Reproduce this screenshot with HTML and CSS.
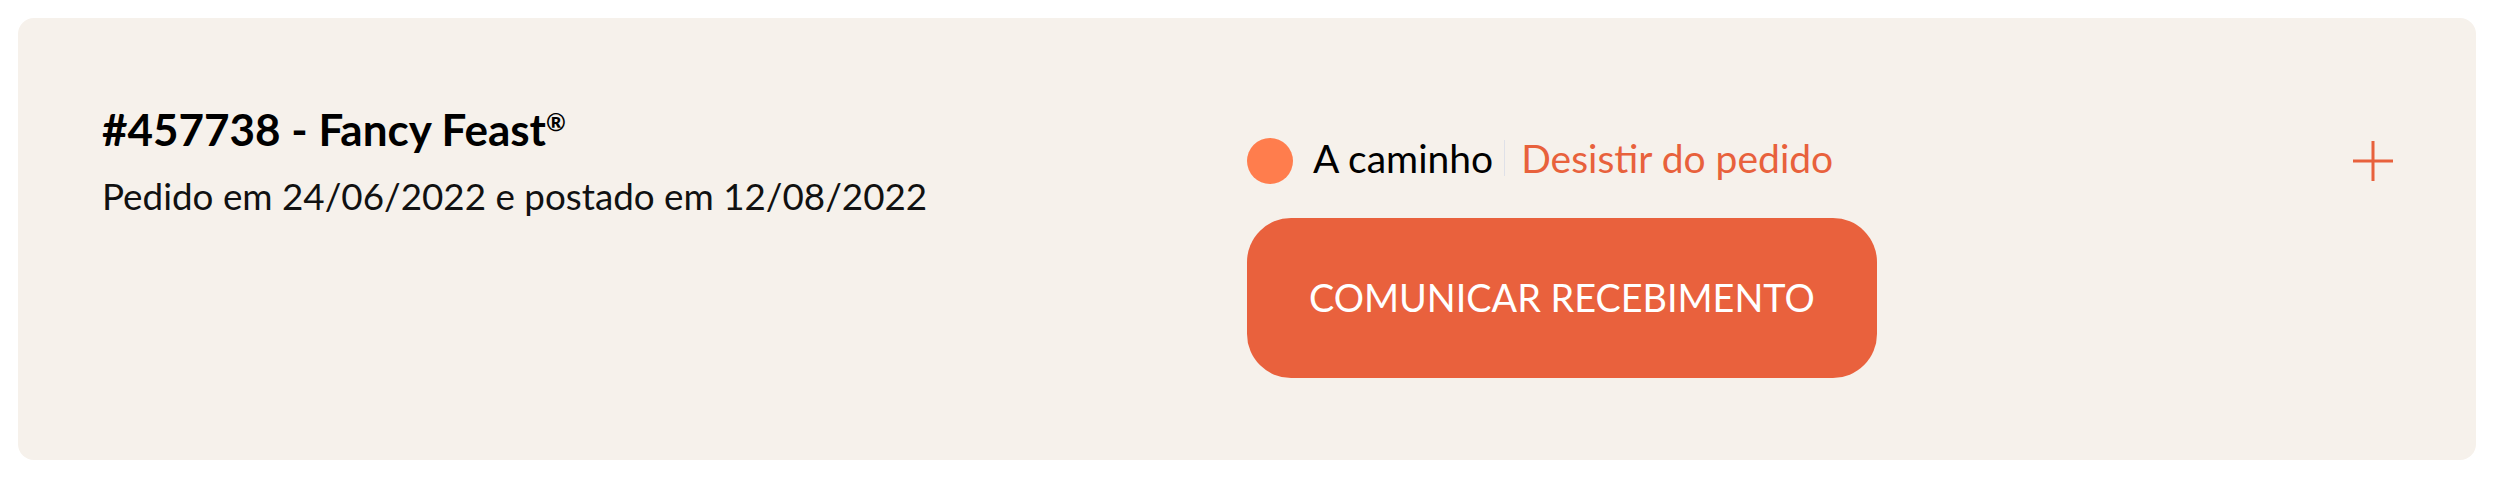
FILE: index.html
```html
<!DOCTYPE html>
<html lang="pt-BR">
<head>
<meta charset="utf-8">
<title>Pedido #457738</title>
<link rel="stylesheet" href="styles.css">
</head>
<body>
  <main class="page">
    <article class="order-card">
      <div class="order-info">
        <h2 class="order-title">#457738 - Fancy Feast<sup class="reg">®</sup></h2>
        <p class="order-dates">Pedido em 24/06/2022 e postado em 12/08/2022</p>
      </div>
      <div class="order-actions">
        <div class="status-row">
          <span class="status-dot"></span>
          <span class="status-label">A caminho</span>
          <a class="cancel-link" href="#">Desistir do pedido</a>
          <button class="expand-btn" type="button" aria-label="Expandir">
            <svg viewBox="0 0 40 40" width="40" height="40" aria-hidden="true">
              <path d="M20 0V40M0 20H40" stroke="currentColor" stroke-width="3" fill="none"/>
            </svg>
          </button>
        </div>
        <button class="confirm-btn" type="button">COMUNICAR RECEBIMENTO</button>
      </div>
    </article>
  </main>
</body>
</html>
```

FILE: styles.css
```css
* { box-sizing: border-box; }

html, body {
  margin: 0;
  padding: 0;
  background: #ffffff;
}

body {
  font-family: Lato, "Noto Sans", "Liberation Sans", sans-serif;
  color: #000;
}

.page {
  padding: 18px 32px 0 18px;
}

.order-card {
  display: flex;
  align-items: flex-start;
  background: #f6f1eb;
  border-radius: 16px;
  padding: 86px 83px 82px 84px;
}

.order-info {
  flex: 0 0 1145px;
}

.order-title {
  margin: 0;
  font-size: 44px;
  line-height: 50px;
  font-weight: 700;
  color: #000;
}

.reg {
  font-size: 24px;
  font-weight: 700;
  vertical-align: top;
  line-height: 1;
  position: relative;
  top: 6px;
}

.order-dates {
  margin: 20px 0 0;
  font-size: 36.8px;
  line-height: 44px;
  font-weight: 400;
  color: #111;
}

.order-actions {
  flex: 1;
  display: flex;
  flex-direction: column;
  align-items: flex-start;
  margin-top: 34px;
  gap: 34px;
}

.status-row {
  display: flex;
  align-items: center;
  width: 100%;
  height: 46px;
}

.status-dot {
  flex: 0 0 46px;
  width: 46px;
  height: 46px;
  border-radius: 50%;
  background: #ff7d4d;
}

.status-label {
  margin: 0 0 6px 20px;
  font-size: 39px;
  line-height: 36px;
  color: #000;
}

.cancel-link {
  margin: 0 0 6px 11px;
  padding-left: 16px;
  border-left: 1px solid #dfe1e8;
  font-size: 39px;
  line-height: 36px;
  color: #e8613c;
  text-decoration: none;
}

.expand-btn {
  margin-left: auto;
  padding: 0;
  border: 0;
  background: none;
  color: #e8613c;
  width: 40px;
  height: 40px;
  display: flex;
}

.confirm-btn {
  border: 0;
  border-radius: 44px;
  background: #e9613d;
  color: #ffffff;
  font-family: Lato, "Noto Sans", "Liberation Sans", sans-serif;
  font-size: 37.8px;
  line-height: 36px;
  font-weight: 400;
  padding: 62px 62px;
  letter-spacing: 0;
}
```
